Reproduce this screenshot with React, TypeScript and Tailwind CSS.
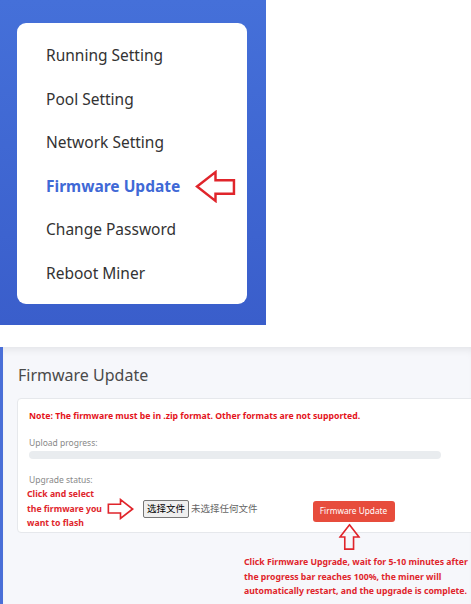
import React from 'react';

const menuItems = [
  'Running Setting',
  'Pool Setting',
  'Network Setting',
  'Firmware Update',
  'Change Password',
  'Reboot Miner',
];

function OutlineArrow({ dir, className }: { dir: 'left' | 'right' | 'up'; className?: string }) {
  // drawn as a left arrow, rotated for the other directions
  const rot = dir === 'left' ? 0 : dir === 'right' ? 180 : 90;
  return (
    <svg viewBox="0 0 40 32" className={className} style={{ transform: `rotate(${rot}deg)` }}>
      <polygon
        points="2,16 20,2 20,10 38,10 38,23 20,23 20,30"
        fill="none"
        stroke="#e0252b"
        strokeWidth="2.4"
        strokeLinejoin="miter"
      />
    </svg>
  );
}

export default function App() {
  return (
    <div
      className="relative flex h-[604px] w-[471px] flex-col overflow-hidden bg-white"
      style={{ fontFamily: '"Noto Sans", "Noto Sans CJK SC", sans-serif' }}
    >
      {/* menu panel */}
      <div className="h-[325px] w-[266px] shrink-0 bg-gradient-to-b from-[#4570d9] to-[#3a5ecb] pl-[17px] pr-[19px] pt-[23px]">
        <div className="flex h-[281px] flex-col rounded-[9px] bg-white pl-[29px] pt-[11px]">
          {menuItems.map((label) => {
            const active = label === 'Firmware Update';
            return (
              <div key={label} className="flex h-[43.5px] items-center">
                <span
                  className={
                    active
                      ? 'text-[15.5px] font-bold text-[#3f69d6]'
                      : 'text-[15.5px] text-[#333]'
                  }
                >
                  {label}
                </span>
                {active && <OutlineArrow dir="left" className="ml-[15px] h-[33px] w-[41px]" />}
              </div>
            );
          })}
        </div>
      </div>

      {/* firmware page */}
      <div className="mt-[22px] min-h-0 flex-1 overflow-hidden border-l-[3px] border-[#4a6fd8] bg-[#f6f7fb] shadow-[inset_0_7px_8px_-5px_rgba(0,0,0,0.09)]">
        <div className="pl-[15px] pt-[16px] text-[16px] leading-[24px] text-[#4a4a4a]">Firmware Update</div>

        <div className="relative ml-[14px] mt-[11px] h-[135px] w-[480px] rounded-[4px] border border-[#e6e8ec] bg-white pl-[11px]">
          <div className="pt-[10px] text-[8.7px] font-bold leading-[14px] text-[#e4131b]">
            Note: The firmware must be in .zip format. Other formats are not supported.
          </div>
          <div className="mt-[14px] text-[8.5px] leading-[12px] text-[#888]">Upload progress:</div>
          <div className="mt-[2px] h-[8px] w-[412px] rounded-full bg-[#e9ecef]" />
          <div className="mt-[15px] text-[8.5px] leading-[12px] text-[#888]">Upgrade status:</div>
          <div className="-ml-[2px] mt-[1px] flex items-center">
            <div className="w-[80px] whitespace-nowrap text-[8.7px] font-bold leading-[14.5px] text-[#e0252b]">
              Click and select
              <br />
              the firmware you
              <br />
              want to flash
            </div>
            <OutlineArrow dir="right" className="h-[22px] w-[27px]" />
            <div className="ml-[9px] flex items-center">
              <span className="rounded-[2px] border border-[#767676] bg-[#efefef] px-[3px] text-[9.5px] leading-[16px] text-black">
                选择文件
              </span>
              <span className="ml-[2px] text-[9.5px] leading-[16px] text-[#666]">未选择任何文件</span>
            </div>
            <div className="relative ml-[55px]">
              <button className="h-[21px] w-[82px] rounded-[3px] bg-[#e74c3c] text-[8.3px] text-white">
                Firmware Update
              </button>
              <OutlineArrow dir="up" className="absolute left-[23px] top-[30px] h-[22px] w-[27px]" />
            </div>
          </div>
        </div>

        <div className="ml-[241px] mt-[22px] whitespace-nowrap text-[8.7px] font-bold leading-[14.5px] text-[#e0252b]">
          Click Firmware Upgrade, wait for 5-10 minutes after
          <br />
          the progress bar reaches 100%, the miner will
          <br />
          automatically restart, and the upgrade is complete.
        </div>
      </div>
    </div>
  );
}
